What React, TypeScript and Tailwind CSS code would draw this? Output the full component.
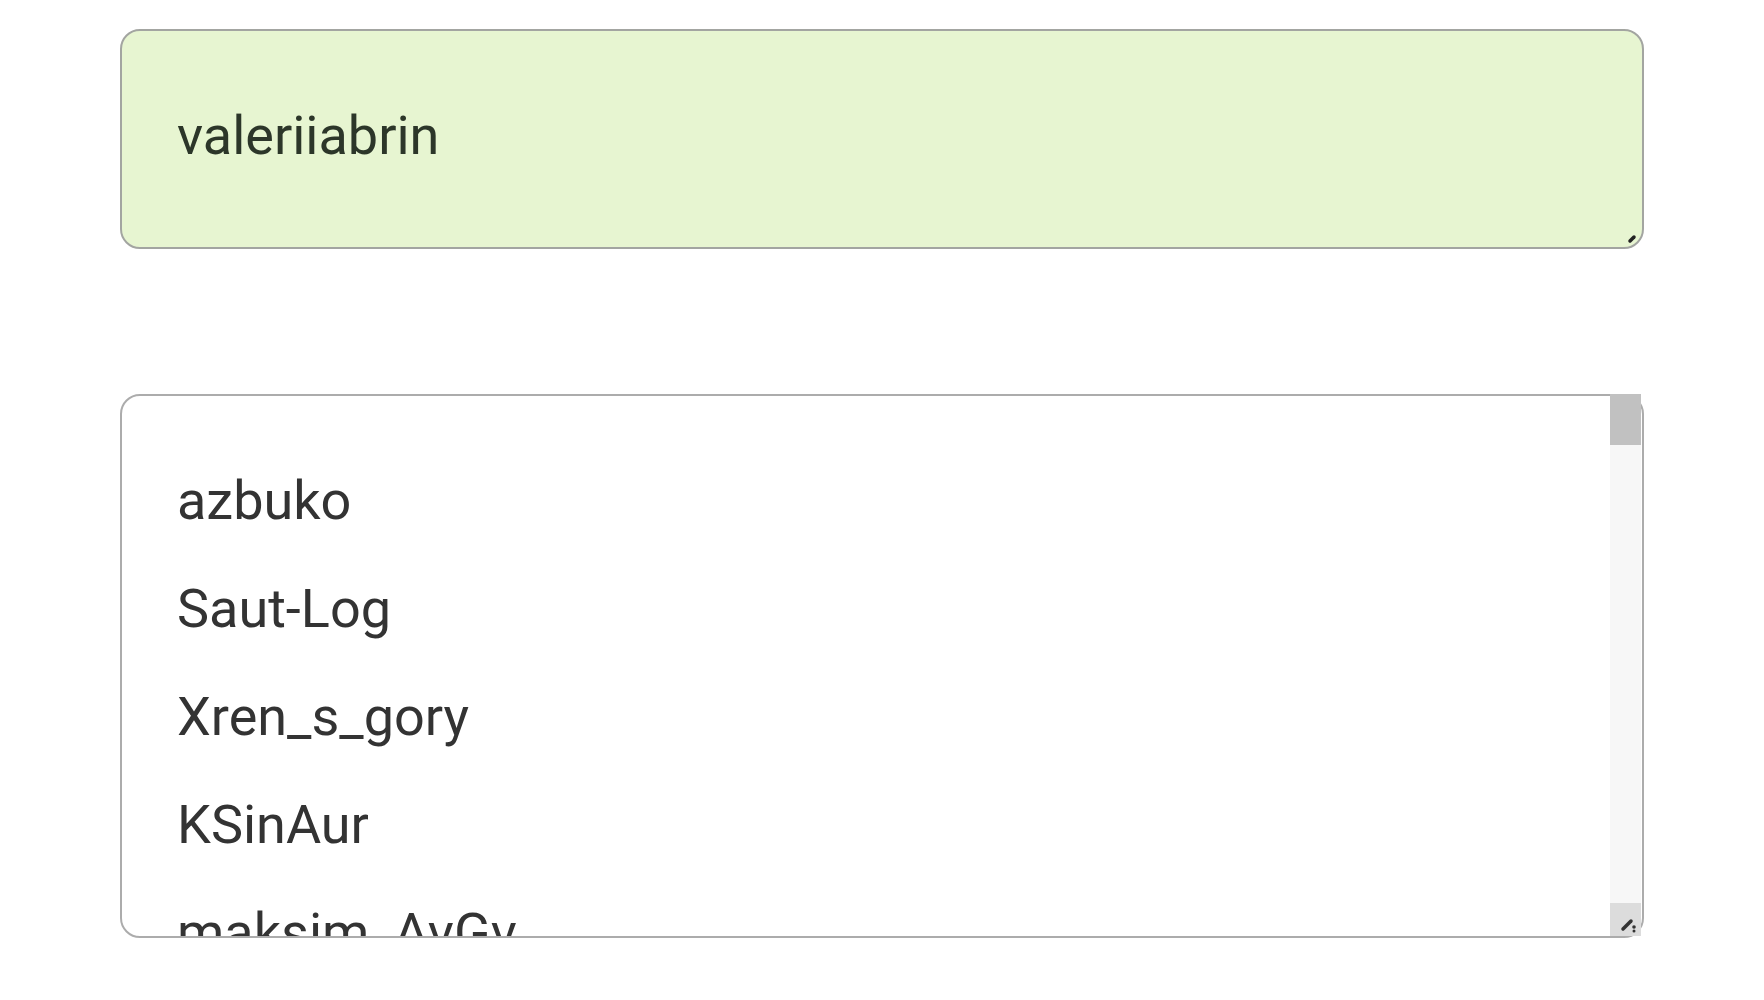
import React from "react";

const items = ["azbuko", "Saut-Log", "Xren_s_gory", "KSinAur", "maksim_AvGv"];

export default function App() {
  return (
    <div className="min-h-[1000px] w-full bg-white px-[120px] pt-[29px]" style={{ fontFamily: "Roboto, 'Noto Sans', sans-serif" }}>
      <div className="relative h-[220px] w-full rounded-[20px] border-2 border-[#a3a5a1] bg-[#e7f5d1] pl-[55px] pt-[51px]">
        <div className="text-[54px] leading-[108px] text-[#2c3629]">valeriiabrin</div>
        <svg className="absolute bottom-[3px] right-[4px]" width="12" height="12" viewBox="0 0 12 12">
          <path d="M4 9 L8 5" stroke="#222" strokeWidth="3.5" strokeLinecap="round" />
        </svg>
      </div>

      <div className="mt-[145px] flex h-[544px] w-full rounded-[20px] border-2 border-[#acacac] bg-white">
        <div className="flex-1 overflow-hidden rounded-l-[18px] pl-[55px] pt-[51px]">
          {items.map((t) => (
            <div key={t} className="whitespace-nowrap text-[54px] leading-[108px] text-[#333333]">
              {t}
            </div>
          ))}
        </div>
        <div className="-mt-[2px] mr-[1px] flex w-[31px] flex-col bg-[#f7f7f7]">
          <div className="h-[51px] bg-[#c1c1c1]" />
          <div className="flex-1" />
          <div className="relative h-[33px] bg-[#dcdcdc]">
            <svg className="absolute bottom-[2px] right-[1px]" width="22" height="20" viewBox="0 0 22 20">
              <path d="M5 15 L13 7" stroke="#333" strokeWidth="3.5" strokeLinecap="round" />
              <circle cx="16" cy="13" r="1.8" fill="#333" />
              <circle cx="16" cy="17" r="1.5" fill="#333" />
            </svg>
          </div>
        </div>
      </div>
    </div>
  );
}
